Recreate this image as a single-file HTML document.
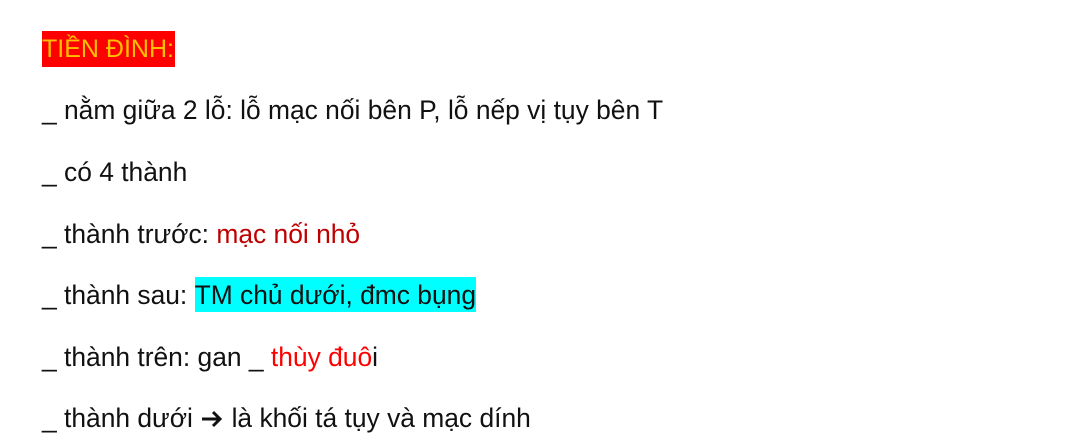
<!DOCTYPE html>
<html><head><meta charset="utf-8"><style>
body{margin:0;background:#fff;width:1072px;height:447px;overflow:hidden;font-family:"Liberation Sans","DejaVu Sans",sans-serif;}
.l{position:absolute;left:42px;font-size:26.4px;color:#111;white-space:nowrap;line-height:36px;}
.r{color:#c00000}
.rr{color:#ff0000}
</style></head><body>
<div class="l" style="top:30px;"><span style="background:#ff0000;color:#ffc000;display:inline-block;height:36px;font-size:25px;padding-right:1px">TIỀN ĐÌNH:</span></div>
<div class="l" style="top:92px">_ nằm giữa 2 lỗ: lỗ mạc nối bên P, lỗ nếp vị tụy bên T</div>
<div class="l" style="top:154px">_ có 4 thành</div>
<div class="l" style="top:216px">_ thành trước: <span class="r">mạc nối nhỏ</span></div>
<div class="l" style="top:277px">_ thành sau: <span style="background:#00ffff;display:inline-block;height:35px">TM chủ dưới, đmc bụng</span></div>
<div class="l" style="top:339px">_ thành trên: gan _ <span class="rr">thùy đuô</span>i</div>
<div class="l" style="top:400px">_ thành dưới <svg width="24" height="20" viewBox="0 0 24 20" style="vertical-align:-2px"><path d="M2 10H20M13 3L20 10L13 17" stroke="#111" stroke-width="3" fill="none"/></svg> là khối tá tụy và mạc dính</div>
</body></html>
